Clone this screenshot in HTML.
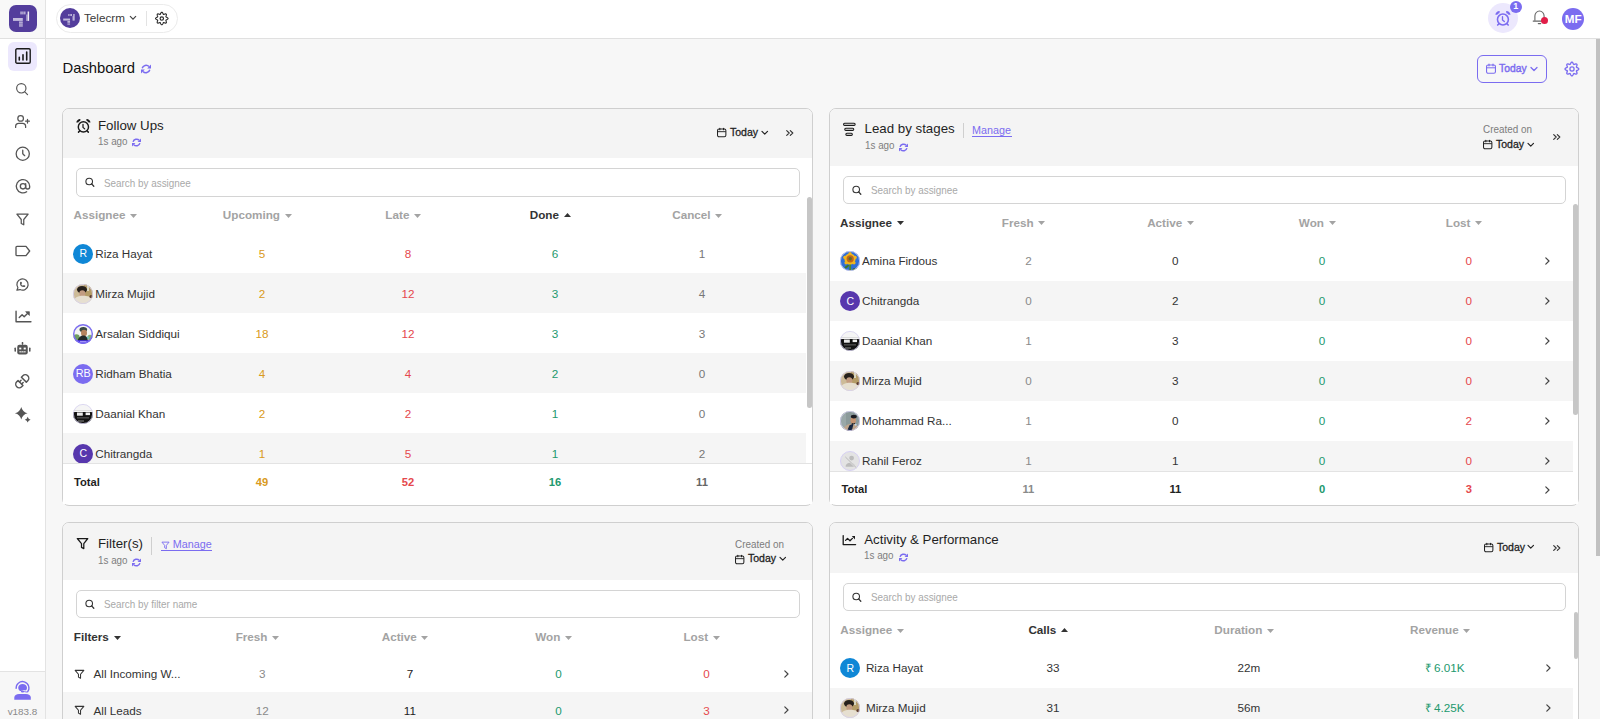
<!DOCTYPE html><html><head><meta charset="utf-8"><style>
*{margin:0;padding:0;box-sizing:border-box}
html,body{width:1600px;height:719px;overflow:hidden;background:#f7f7f7;font-family:"Liberation Sans",sans-serif;color:#222}
.a{position:absolute}
.t{position:absolute;white-space:nowrap;line-height:1}
svg{position:absolute;overflow:visible}
.card{position:absolute;background:#fff;border:1px solid #cfcfcf;border-radius:7px;overflow:hidden}
.chd{position:absolute;left:0;top:0;right:0;background:#f4f4f4}
.srch{position:absolute;border:1px solid #d4d4d4;border-radius:5px;background:#fff}
.gray{background:#f5f5f5}
</style></head><body>
<div class="a" style="left:0;top:0;width:1600px;height:39px;background:#fff;border-bottom:1px solid #e0e0e0"></div>
<div class="a" style="left:0;top:0;width:45px;height:39px;background:#f8f8f8;border-bottom:1px solid #e0e0e0"></div>
<div class="a" style="left:0;top:39px;width:46px;height:680px;background:#fff;border-right:1px solid #e0e0e0"></div>
<div class="a" style="left:45px;top:0;width:1px;height:719px;background:#e3e3e3"></div>
<div class="a" style="left:0;top:671px;width:45px;height:48px;background:#f7f7f7;border-top:1px solid #e3e3e3"></div>
<div class="a" style="left:8.6px;top:4.6px;width:28.2px;height:27.8px;border-radius:7px;background:#533d9c"></div>
<svg style="left:8px;top:4px" width="29" height="29" viewBox="0 0 29 29"><g fill="#fff"><rect x="12.5" y="7.5" width="1.1" height="2.9" opacity="0.8"/><rect x="14.4" y="7.5" width="1.1" height="2.9" opacity="0.8"/><rect x="16.3" y="7.5" width="1.1" height="2.9" opacity="0.8"/><rect x="19.6" y="7.5" width="1.5" height="9.4" opacity="0.9"/><rect x="18.1" y="10.5" width="1.5" height="6.4" opacity="0.45"/><rect x="5" y="14" width="9.8" height="2.9" opacity="0.65"/><rect x="11" y="17.6" width="3.8" height="1.1" opacity="0.8"/><rect x="11" y="19.5" width="3.8" height="1.1" opacity="0.8"/><rect x="11" y="21.4" width="3.8" height="1.1" opacity="0.8"/></g></svg>
<div class="a" style="left:56px;top:4px;width:122px;height:29px;border:1px solid #ebebeb;border-radius:15px;background:#fff"></div>
<div class="a" style="left:60px;top:8px;width:20px;height:20px;border-radius:50%;background:#533d9c"></div>
<svg style="left:60px;top:8px" width="20" height="20" viewBox="0 0 20 20"><g transform="translate(-0.3 0.75) scale(0.7)"><g fill="#fff"><rect x="12.5" y="7.5" width="1.1" height="2.9" opacity="0.8"/><rect x="14.4" y="7.5" width="1.1" height="2.9" opacity="0.8"/><rect x="16.3" y="7.5" width="1.1" height="2.9" opacity="0.8"/><rect x="19.6" y="7.5" width="1.5" height="9.4" opacity="0.9"/><rect x="18.1" y="10.5" width="1.5" height="6.4" opacity="0.45"/><rect x="5" y="14" width="9.8" height="2.9" opacity="0.65"/><rect x="11" y="17.6" width="3.8" height="1.1" opacity="0.8"/><rect x="11" y="19.5" width="3.8" height="1.1" opacity="0.8"/><rect x="11" y="21.4" width="3.8" height="1.1" opacity="0.8"/></g></g></svg>
<div class="t" style="left:84.00px;top:12.00px;font-size:11.7px;color:#3a3a3a;-webkit-text-stroke:0.0px #3a3a3a;">Telecrm</div>
<svg style="left:129px;top:15px" width="8" height="6" viewBox="0 0 8 6"><path d="M1 1.2 L4 4.2 L7 1.2" fill="none" stroke="#444" stroke-width="1.2"/></svg>
<div class="a" style="left:146px;top:11px;width:1px;height:15px;background:#e3e3e3"></div>
<svg style="left:154px;top:11px" width="16" height="16" viewBox="0 0 16 16"><path d="M7.80 1.25 L8.04 1.30 L8.28 1.44 L8.49 1.66 L8.68 1.94 L8.84 2.25 L8.98 2.57 L9.11 2.86 L9.23 3.10 L9.36 3.28 L9.50 3.39 L9.68 3.42 L9.90 3.38 L10.16 3.29 L10.45 3.18 L10.77 3.05 L11.11 2.95 L11.44 2.88 L11.75 2.88 L12.01 2.94 L12.22 3.08 L12.36 3.29 L12.42 3.55 L12.42 3.86 L12.35 4.19 L12.25 4.53 L12.12 4.85 L12.01 5.14 L11.92 5.40 L11.88 5.62 L11.91 5.80 L12.02 5.94 L12.20 6.07 L12.44 6.19 L12.73 6.32 L13.05 6.46 L13.36 6.62 L13.64 6.81 L13.86 7.02 L14.00 7.26 L14.05 7.50 L14.00 7.74 L13.86 7.98 L13.64 8.19 L13.36 8.38 L13.05 8.54 L12.73 8.68 L12.44 8.81 L12.20 8.93 L12.02 9.06 L11.91 9.20 L11.88 9.38 L11.92 9.60 L12.01 9.86 L12.12 10.15 L12.25 10.47 L12.35 10.81 L12.42 11.14 L12.42 11.45 L12.36 11.71 L12.22 11.92 L12.01 12.06 L11.75 12.12 L11.44 12.12 L11.11 12.05 L10.77 11.95 L10.45 11.82 L10.16 11.71 L9.90 11.62 L9.68 11.58 L9.50 11.61 L9.36 11.72 L9.23 11.90 L9.11 12.14 L8.98 12.43 L8.84 12.75 L8.68 13.06 L8.49 13.34 L8.28 13.56 L8.04 13.70 L7.80 13.75 L7.56 13.70 L7.32 13.56 L7.11 13.34 L6.92 13.06 L6.76 12.75 L6.62 12.43 L6.49 12.14 L6.37 11.90 L6.24 11.72 L6.10 11.61 L5.92 11.58 L5.70 11.62 L5.44 11.71 L5.15 11.82 L4.83 11.95 L4.49 12.05 L4.16 12.12 L3.85 12.12 L3.59 12.06 L3.38 11.92 L3.24 11.71 L3.18 11.45 L3.18 11.14 L3.25 10.81 L3.35 10.47 L3.48 10.15 L3.59 9.86 L3.68 9.60 L3.72 9.38 L3.69 9.20 L3.58 9.06 L3.40 8.93 L3.16 8.81 L2.87 8.68 L2.55 8.54 L2.24 8.38 L1.96 8.19 L1.74 7.98 L1.60 7.74 L1.55 7.50 L1.60 7.26 L1.74 7.02 L1.96 6.81 L2.24 6.62 L2.55 6.46 L2.87 6.32 L3.16 6.19 L3.40 6.07 L3.58 5.94 L3.69 5.80 L3.72 5.62 L3.68 5.40 L3.59 5.14 L3.48 4.85 L3.35 4.53 L3.25 4.19 L3.18 3.86 L3.18 3.55 L3.24 3.29 L3.38 3.08 L3.59 2.94 L3.85 2.88 L4.16 2.88 L4.49 2.95 L4.83 3.05 L5.15 3.18 L5.44 3.29 L5.70 3.38 L5.92 3.42 L6.10 3.39 L6.24 3.28 L6.37 3.10 L6.49 2.86 L6.62 2.57 L6.76 2.25 L6.92 1.94 L7.11 1.66 L7.32 1.44 L7.56 1.30Z" fill="none" stroke="#2a2a2a" stroke-width="1.1"/><circle cx="7.8" cy="7.5" r="1.7" fill="none" stroke="#2a2a2a" stroke-width="1.15"/></svg>
<div class="a" style="left:1487.5px;top:3px;width:30px;height:30px;border-radius:50%;background:#ece8fd"></div>
<svg style="left:1495px;top:10.8px" width="15" height="15" viewBox="0 0 14 14"><circle cx="7.4" cy="7.9" r="5.1" fill="none" stroke="#7b6cf0" stroke-width="1.45"/><path d="M7 5.3V8.4L8.7 9.9" fill="none" stroke="#7b6cf0" stroke-width="1.25" stroke-linecap="round" stroke-linejoin="round"/><path d="M1.3 3.5A2.7 2.7 0 0 1 4.3 1.1 M13.5 3.5A2.7 2.7 0 0 0 10.5 1.1" fill="none" stroke="#7b6cf0" stroke-width="2"/><path d="M3.6 12L2.5 13.1 M11.2 12L12.3 13.1" stroke="#7b6cf0" stroke-width="1.5" stroke-linecap="round"/></svg>
<div class="a" style="left:1509.8px;top:0.8px;width:12px;height:12px;border-radius:50%;background:#7b6cf0"></div>
<div class="t" style="left:1513.30px;top:2.28px;font-size:9px;color:#fff;font-weight:bold;">1</div>
<svg style="left:1532px;top:10px" width="14" height="15" viewBox="0 0 14 15"><path d="M2.9 10.8V6.1A4.6 5.1 0 0 1 12.1 6.1V10.8" fill="none" stroke="#666" stroke-width="1.1"/><path d="M1.2 11.1H13.3" stroke="#666" stroke-width="1.1" stroke-linecap="round"/><path d="M6.3 13.6H8.7" stroke="#666" stroke-width="1.1" stroke-linecap="round"/></svg>
<div class="a" style="left:1540.5px;top:16.5px;width:7px;height:7px;border-radius:50%;background:#e11d48"></div>
<div class="a" style="left:1562px;top:7.5px;width:22px;height:22px;border-radius:50%;background:#7b6cf0"></div>
<div class="t" style="left:1564.75px;top:12.60px;font-size:11.7px;color:#fff;font-weight:bold;">MF</div>
<div class="a" style="left:8px;top:42px;width:29px;height:29px;border-radius:6px;background:#ece8fd"></div>
<svg style="left:14.5px;top:48px" width="16" height="16" viewBox="0 0 16 16"><rect x="0.8" y="0.8" width="14.4" height="14.4" rx="1.2" fill="none" stroke="#1a1a1a" stroke-width="1.4"/><path d="M4.3 12V9.2 M8 12V6.8 M11.7 12V4" stroke="#1a1a1a" stroke-width="1.6" stroke-linecap="round"/></svg>
<svg style="left:15.2px;top:81.8px" width="14" height="14" viewBox="0 0 24 24"><circle cx="10.8" cy="10.8" r="8" fill="none" stroke="#555" stroke-width="2" stroke-linecap="round" stroke-linejoin="round"/><path d="M16.8 16.8l4.7 4.7" fill="none" stroke="#555" stroke-width="2" stroke-linecap="round" stroke-linejoin="round"/></svg>
<svg style="left:14px;top:114px" width="17" height="15" viewBox="0 0 26 24"><circle cx="10" cy="7" r="4.5" fill="none" stroke="#555" stroke-width="2" stroke-linecap="round" stroke-linejoin="round"/><path d="M2 21.5v-1.5a5 5 0 0 1 5-5h6a5 5 0 0 1 5 5v1.5" fill="none" stroke="#555" stroke-width="2" stroke-linecap="round" stroke-linejoin="round"/><path d="M21 8.5v6 M18 11.5h6" fill="none" stroke="#555" stroke-width="2" stroke-linecap="round" stroke-linejoin="round"/></svg>
<svg style="left:14.5px;top:146px" width="15.5" height="15.5" viewBox="0 0 24 24"><circle cx="12" cy="12" r="10.2" fill="none" stroke="#555" stroke-width="2" stroke-linecap="round" stroke-linejoin="round"/><path d="M12 6.5v5.5l3 3" fill="none" stroke="#555" stroke-width="2" stroke-linecap="round" stroke-linejoin="round"/></svg>
<svg style="left:14.5px;top:179.2px" width="16" height="16" viewBox="0 0 24 24"><circle cx="12" cy="11" r="4" fill="none" stroke="#555" stroke-width="2" stroke-linecap="round" stroke-linejoin="round"/><path d="M16 7v5a3 3 0 0 0 6 0v-1a10 10 0 1 0-4.5 8.2" fill="none" stroke="#555" stroke-width="2" stroke-linecap="round" stroke-linejoin="round"/></svg>
<svg style="left:15px;top:212px" width="15" height="15" viewBox="0 0 24 24"><path d="M3 3.5h18l-7 8.5v8.5l-4-2v-6.5z" fill="none" stroke="#555" stroke-width="2" stroke-linecap="round" stroke-linejoin="round"/></svg>
<svg style="left:15px;top:245px" width="16" height="12" viewBox="0 0 24 18"><path d="M3 2h13.5l5.5 7-5.5 7H3a1.5 1.5 0 0 1-1.5-1.5v-11A1.5 1.5 0 0 1 3 2z" fill="none" stroke="#555" stroke-width="2" stroke-linecap="round" stroke-linejoin="round"/></svg>
<svg style="left:15px;top:276.5px" width="15" height="15" viewBox="0 0 24 24"><path d="M3 21l1.65-3.8a9 9 0 1 1 3.4 2.9L3 21" fill="none" stroke="#555" stroke-width="2" stroke-linecap="round" stroke-linejoin="round"/><path d="M9 10a.5.5 0 0 0 1 0V9a.5.5 0 0 0-1 0v1a5 5 0 0 0 5 5h1a.5.5 0 0 0 0-1h-1a.5.5 0 0 0 0 1" fill="none" stroke="#555" stroke-width="2" stroke-linecap="round" stroke-linejoin="round"/></svg>
<svg style="left:14.5px;top:309.5px" width="17" height="13" viewBox="0 0 24 18"><path d="M1.5 1.5v15h21" fill="none" stroke="#555" stroke-width="2" stroke-linecap="round" stroke-linejoin="round"/><path d="M6 10.5l4-4 3 3 5-5" fill="none" stroke="#555" stroke-width="2" stroke-linecap="round" stroke-linejoin="round"/><path d="M15 2.2h5.3v5.3z" fill="#555" stroke="#555" stroke-width="1" stroke-linejoin="round"/></svg>
<svg style="left:14px;top:342px" width="17" height="14" viewBox="0 0 24 20"><g fill="#555"><rect x="11.2" y="0" width="1.6" height="4"/><circle cx="12" cy="1.5" r="1.3"/><rect x="4.5" y="4" width="15" height="14" rx="3"/><rect x="0.5" y="8" width="2.2" height="6" rx="1"/><rect x="21.3" y="8" width="2.2" height="6" rx="1"/></g><g fill="#fff"><rect x="7.3" y="8" width="3" height="2.6"/><rect x="13.7" y="8" width="3" height="2.6"/><rect x="7.5" y="13.3" width="9" height="1.5"/></g><g fill="#555"><rect x="9.8" y="13.3" width="0.8" height="1.5"/><rect x="13.4" y="13.3" width="0.8" height="1.5"/></g></svg>
<svg style="left:11.3px;top:370.2px" width="22.5" height="22.5" viewBox="0 0 24 24"><g transform="rotate(-45 12 12)" fill="none" stroke="#555" stroke-width="1.55" stroke-linejoin="round" stroke-linecap="round"><path d="M14.4 8.3h2.2a3.7 3.7 0 0 1 0 7.4h-2.2z"/><path d="M9.4 8.3h-2a3.7 3.7 0 0 0 0 7.4h2z"/><path d="M9.4 10.4h2.4 M9.4 13.6h2.4"/></g></svg>
<svg style="left:14px;top:406px" width="17" height="17" viewBox="0 0 17 17"><path fill="#555" d="M7.25 0.9000000000000004Q8.51 5.94 13.55 7.2Q8.51 8.46 7.25 13.5Q5.99 8.46 0.9500000000000002 7.2Q5.99 5.94 7.25 0.9000000000000004Z"/><path fill="#555" d="M13.7 10.799999999999999Q14.28 13.12 16.599999999999998 13.7Q14.28 14.28 13.7 16.599999999999998Q13.12 14.28 10.799999999999999 13.7Q13.12 13.12 13.7 10.799999999999999Z"/></svg>
<svg style="left:14px;top:680px" width="17" height="20" viewBox="0 0 17 20"><path d="M2.2 8.9A6.4 6.4 0 1 1 13.4 12.1" fill="none" stroke="#7b6cf0" stroke-width="1.3"/><path d="M8.6 4C11 4 13 5.6 13 7.8C13 9 12.5 10 11.6 10.6C10.8 10.2 9.8 10.3 8.8 10.6C7.6 11 6.2 11.3 5.4 10.5C4.6 9.8 4.2 8.8 4.2 7.8C4.2 5.6 6.2 4 8.6 4Z" fill="#7b6cf0"/><ellipse cx="8.6" cy="11.6" rx="1.8" ry="0.9" fill="#7b6cf0"/><path d="M13.4 12.1C12.5 12.2 11 11.6 10.3 11.6" fill="none" stroke="#7b6cf0" stroke-width="1"/><path d="M0.3 19.75V17.6C0.3 15.1 2.4 13.9 5 13.9H12C14.6 13.9 16.8 15.1 16.8 17.6V19.75Z" fill="#7b6cf0"/></svg>
<div class="t" style="left:7.64px;top:706.92px;font-size:9.9px;color:#8a8a8a;-webkit-text-stroke:0.0px #8a8a8a;">v183.8</div>
<div class="t" style="left:62.50px;top:60.67px;font-size:14.8px;color:#111;-webkit-text-stroke:0.0px #111;">Dashboard</div>
<svg style="left:141px;top:63.5px" width="10" height="10" viewBox="0 0 10 10"><path d="M1.2 4.3A4 4 0 0 1 8 2.6 M8.8 5.7A4 4 0 0 1 2 7.4" fill="none" stroke="#7b6cf0" stroke-width="1.5"/><path d="M10 0.6V4.4H6.2Z M0 9.4V5.6H3.8Z" fill="#7b6cf0"/></svg>
<div class="a" style="left:1477px;top:55px;width:70px;height:28px;border:1.2px solid #7b6cf0;border-radius:6px"></div>
<svg style="left:1485.8px;top:63.8px" width="10" height="10" viewBox="0 0 10 10"><rect x="0.55" y="1" width="8.9" height="8.3" rx="1.6" fill="none" stroke="#7b6cf0" stroke-width="1.1"/><path d="M0.6 3.8H9.4" stroke="#7b6cf0" stroke-width="1"/><path d="M3 0.2V1.8 M7 0.2V1.8" stroke="#7b6cf0" stroke-width="1.2" stroke-linecap="round"/></svg>
<div class="t" style="left:1498.90px;top:61.90px;font-size:11.7px;color:#7b6cf0;transform:scaleX(0.885);transform-origin:0 0;-webkit-text-stroke:0.45px #7b6cf0">Today</div>
<svg style="left:1529.5px;top:65.5px" width="8" height="6" viewBox="0 0 8 6"><path d="M1 1.5L4 4.5L7 1.5" fill="none" stroke="#7b6cf0" stroke-width="1.3" stroke-linecap="round" stroke-linejoin="round"/></svg>
<svg style="left:1563.5px;top:60.5px" width="16" height="16" viewBox="0 0 16 16"><path d="M7.90 1.15 L8.17 1.20 L8.42 1.35 L8.66 1.59 L8.87 1.88 L9.05 2.21 L9.21 2.55 L9.35 2.86 L9.49 3.12 L9.63 3.31 L9.79 3.43 L9.99 3.46 L10.23 3.43 L10.51 3.34 L10.83 3.22 L11.18 3.09 L11.54 2.99 L11.90 2.93 L12.23 2.93 L12.52 3.00 L12.74 3.16 L12.90 3.38 L12.97 3.67 L12.97 4.00 L12.91 4.36 L12.81 4.72 L12.68 5.07 L12.56 5.39 L12.47 5.67 L12.44 5.91 L12.47 6.11 L12.59 6.27 L12.78 6.41 L13.04 6.55 L13.35 6.69 L13.69 6.85 L14.02 7.03 L14.31 7.24 L14.55 7.48 L14.70 7.73 L14.75 8.00 L14.70 8.27 L14.55 8.52 L14.31 8.76 L14.02 8.97 L13.69 9.15 L13.35 9.31 L13.04 9.45 L12.78 9.59 L12.59 9.73 L12.47 9.89 L12.44 10.09 L12.47 10.33 L12.56 10.61 L12.68 10.93 L12.81 11.28 L12.91 11.64 L12.97 12.00 L12.97 12.33 L12.90 12.62 L12.74 12.84 L12.52 13.00 L12.23 13.07 L11.90 13.07 L11.54 13.01 L11.18 12.91 L10.83 12.78 L10.51 12.66 L10.23 12.57 L9.99 12.54 L9.79 12.57 L9.63 12.69 L9.49 12.88 L9.35 13.14 L9.21 13.45 L9.05 13.79 L8.87 14.12 L8.66 14.41 L8.42 14.65 L8.17 14.80 L7.90 14.85 L7.63 14.80 L7.38 14.65 L7.14 14.41 L6.93 14.12 L6.75 13.79 L6.59 13.45 L6.45 13.14 L6.31 12.88 L6.17 12.69 L6.01 12.57 L5.81 12.54 L5.57 12.57 L5.29 12.66 L4.97 12.78 L4.62 12.91 L4.26 13.01 L3.90 13.07 L3.57 13.07 L3.28 13.00 L3.06 12.84 L2.90 12.62 L2.83 12.33 L2.83 12.00 L2.89 11.64 L2.99 11.28 L3.12 10.93 L3.24 10.61 L3.33 10.33 L3.36 10.09 L3.33 9.89 L3.21 9.73 L3.02 9.59 L2.76 9.45 L2.45 9.31 L2.11 9.15 L1.78 8.97 L1.49 8.76 L1.25 8.52 L1.10 8.27 L1.05 8.00 L1.10 7.73 L1.25 7.48 L1.49 7.24 L1.78 7.03 L2.11 6.85 L2.45 6.69 L2.76 6.55 L3.02 6.41 L3.21 6.27 L3.33 6.11 L3.36 5.91 L3.33 5.67 L3.24 5.39 L3.12 5.07 L2.99 4.72 L2.89 4.36 L2.83 4.00 L2.83 3.67 L2.90 3.38 L3.06 3.16 L3.28 3.00 L3.57 2.93 L3.90 2.93 L4.26 2.99 L4.62 3.09 L4.97 3.22 L5.29 3.34 L5.57 3.43 L5.81 3.46 L6.01 3.43 L6.17 3.31 L6.31 3.12 L6.45 2.86 L6.59 2.55 L6.75 2.21 L6.93 1.88 L7.14 1.59 L7.38 1.35 L7.63 1.20Z" fill="none" stroke="#7b6cf0" stroke-width="1.35"/><circle cx="8" cy="8" r="2.1" fill="none" stroke="#7b6cf0" stroke-width="1.3"/></svg>
<div class="card" style="left:62px;top:108px;width:751px;height:398px"><div class="chd" style="height:49px"></div></div>
<svg style="left:75.5px;top:119px" width="14" height="14" viewBox="0 0 14 14"><circle cx="7.4" cy="7.9" r="5.1" fill="none" stroke="#1a1a1a" stroke-width="1.45"/><path d="M7 5.3V8.4L8.7 9.9" fill="none" stroke="#1a1a1a" stroke-width="1.25" stroke-linecap="round" stroke-linejoin="round"/><path d="M1.3 3.5A2.7 2.7 0 0 1 4.3 1.1 M13.5 3.5A2.7 2.7 0 0 0 10.5 1.1" fill="none" stroke="#1a1a1a" stroke-width="2"/><path d="M3.6 12L2.5 13.1 M11.2 12L12.3 13.1" stroke="#1a1a1a" stroke-width="1.5" stroke-linecap="round"/></svg>
<div class="t" style="left:98.00px;top:118.84px;font-size:13.3px;color:#1f1f1f;-webkit-text-stroke:0.0px #1f1f1f;">Follow Ups</div>
<div class="t" style="left:98.00px;top:136.95px;font-size:10.1px;color:#7e7e7e;-webkit-text-stroke:0.0px #7e7e7e;transform:scaleX(0.975);transform-origin:0 0">1s ago</div>
<svg style="left:132.2px;top:138.3px" width="9" height="9" viewBox="0 0 10 10"><path d="M1.2 4.3A4 4 0 0 1 8 2.6 M8.8 5.7A4 4 0 0 1 2 7.4" fill="none" stroke="#7b6cf0" stroke-width="1.6"/><path d="M10 0.6V4.4H6.2Z M0 9.4V5.6H3.8Z" fill="#7b6cf0"/></svg>
<svg style="left:717.0px;top:128.3px" width="9.4" height="9.6" viewBox="0 0 10 10"><rect x="0.55" y="1" width="8.9" height="8.3" rx="1.6" fill="none" stroke="#222" stroke-width="1.1"/><path d="M0.6 3.8H9.4" stroke="#222" stroke-width="1"/><path d="M3 0.2V1.8 M7 0.2V1.8" stroke="#222" stroke-width="1.2" stroke-linecap="round"/></svg>
<div class="t" style="left:729.90px;top:126.00px;font-size:11.7px;color:#222;transform:scaleX(0.9);transform-origin:0 0;-webkit-text-stroke:0.3px #222">Today</div>
<svg style="left:760.7px;top:129.70000000000002px" width="7.5" height="5.5" viewBox="0 0 8 6"><path d="M1 1.5L4 4.5L7 1.5" fill="none" stroke="#222" stroke-width="1.3" stroke-linecap="round" stroke-linejoin="round"/></svg>
<svg style="left:786px;top:130px" width="8" height="6" viewBox="0 0 8 6"><path d="M0.7 0.6L3.2 3L0.7 5.4 M4.3 0.6L6.8 3L4.3 5.4" fill="none" stroke="#333" stroke-width="1.15" stroke-linecap="round" stroke-linejoin="round"/></svg>
<div class="srch" style="left:76px;top:168px;width:724px;height:29px"></div>
<svg style="left:85px;top:176.5px" width="10" height="10" viewBox="0 0 10 10"><circle cx="4.2" cy="4.5" r="3.3" fill="none" stroke="#333" stroke-width="1.1"/><path d="M6.6 6.9L8.8 9.2" stroke="#333" stroke-width="1.3" stroke-linecap="round"/></svg>
<div class="t" style="left:103.50px;top:177.66px;font-size:10.8px;color:#a9a9a9;-webkit-text-stroke:0.0px #a9a9a9;transform:scaleX(0.915);transform-origin:0 0">Search by assignee</div>
<div class="t" style="left:73.50px;top:209.30px;font-size:11.7px;color:#a3a3a3;font-weight:bold;">Assignee</div>
<svg style="left:130.11746875px;top:213.79999999999998px" width="7" height="4" viewBox="0 0 7 4"><path d="M0 0L3.5 4L7 0z" fill="#a3a3a3"/></svg>
<div class="t" style="left:222.80px;top:209.30px;font-size:11.7px;color:#a3a3a3;font-weight:bold;">Upcoming</div>
<svg style="left:284.597359375px;top:213.79999999999998px" width="7" height="4" viewBox="0 0 7 4"><path d="M0 0L3.5 4L7 0z" fill="#a3a3a3"/></svg>
<div class="t" style="left:385.37px;top:209.30px;font-size:11.7px;color:#a3a3a3;font-weight:bold;">Late</div>
<svg style="left:414.02723437500003px;top:213.79999999999998px" width="7" height="4" viewBox="0 0 7 4"><path d="M0 0L3.5 4L7 0z" fill="#a3a3a3"/></svg>
<div class="t" style="left:529.78px;top:209.30px;font-size:11.7px;color:#333;font-weight:bold;">Done</div>
<svg style="left:563.6240859375px;top:213.39999999999998px" width="7" height="4" viewBox="0 0 7 4"><path d="M0 4L3.5 0L7 4z" fill="#333"/></svg>
<div class="t" style="left:672.22px;top:209.30px;font-size:11.7px;color:#a3a3a3;font-weight:bold;">Cancel</div>
<svg style="left:715.1825156250001px;top:213.79999999999998px" width="7" height="4" viewBox="0 0 7 4"><path d="M0 0L3.5 4L7 0z" fill="#a3a3a3"/></svg>
<div class="a gray" style="left:63px;top:273px;width:743px;height:40px"></div>
<div class="a gray" style="left:63px;top:353px;width:743px;height:40px"></div>
<div class="a gray" style="left:63px;top:433px;width:743px;height:30px"></div>
<div class="a" style="left:73.2px;top:243.6px;width:20px;height:20px;border-radius:50%;background:#0f87d6"></div>
<div class="t" style="left:79.41px;top:248.41px;font-size:10.5px;color:#fff;-webkit-text-stroke:0.0px #fff;">R</div>
<div class="t" style="left:95.20px;top:247.90px;font-size:11.7px;color:#333;-webkit-text-stroke:0.0px #333;">Riza Hayat</div>
<div class="t" style="left:258.75px;top:247.90px;font-size:11.7px;color:#d99a20;-webkit-text-stroke:0.0px #d99a20;">5</div>
<div class="t" style="left:404.75px;top:247.90px;font-size:11.7px;color:#e5484d;-webkit-text-stroke:0.0px #e5484d;">8</div>
<div class="t" style="left:551.75px;top:247.90px;font-size:11.7px;color:#22996e;-webkit-text-stroke:0.0px #22996e;">6</div>
<div class="t" style="left:698.75px;top:247.90px;font-size:11.7px;color:#777;-webkit-text-stroke:0.0px #777;">1</div>
<svg style="left:73.2px;top:283.6px" width="20" height="20" viewBox="0 0 20 20"><defs><clipPath id="cm1"><circle cx="10" cy="10" r="10"/></clipPath></defs><g clip-path="url(#cm1)"><rect width="20" height="20" fill="#cdbb98"/><rect x="11" y="0" width="9" height="12" fill="#b59d68"/><rect x="14" y="1" width="2" height="6" fill="#d9d6c0"/><ellipse cx="9" cy="5.6" rx="5" ry="3.6" fill="#26201c"/><ellipse cx="9.3" cy="9.6" rx="3" ry="3.3" fill="#c29c82"/><path d="M7 6.5c1-1.5 4-1.5 5.3 0.3L12 5 8 4z" fill="#26201c"/><path d="M0 20C0 14 4.5 11.8 10 11.8S20 14 20 20Z" fill="#e6dfd0"/><ellipse cx="18" cy="12.5" rx="1.6" ry="1.6" fill="#5a3a2a"/></g><circle cx="10" cy="10" r="9.6" fill="none" stroke="#d6d0f0" stroke-width="0.8"/></svg>
<div class="t" style="left:95.20px;top:287.90px;font-size:11.7px;color:#333;-webkit-text-stroke:0.0px #333;">Mirza Mujid</div>
<div class="t" style="left:258.75px;top:287.90px;font-size:11.7px;color:#d99a20;-webkit-text-stroke:0.0px #d99a20;">2</div>
<div class="t" style="left:401.49px;top:287.90px;font-size:11.7px;color:#e5484d;-webkit-text-stroke:0.0px #e5484d;">12</div>
<div class="t" style="left:551.75px;top:287.90px;font-size:11.7px;color:#22996e;-webkit-text-stroke:0.0px #22996e;">3</div>
<div class="t" style="left:698.75px;top:287.90px;font-size:11.7px;color:#777;-webkit-text-stroke:0.0px #777;">4</div>
<svg style="left:73.2px;top:323.6px" width="20" height="20" viewBox="0 0 20 20"><defs><clipPath id="ca"><circle cx="10" cy="10" r="10"/></clipPath></defs><g clip-path="url(#ca)"><rect width="20" height="20" fill="#f4f6f3"/><ellipse cx="3.5" cy="13.5" rx="3.2" ry="3.2" fill="#6f9e62"/><ellipse cx="17" cy="13.5" rx="2.6" ry="2.8" fill="#88b27c"/><circle cx="14.5" cy="13.8" r="1.4" fill="#6cc8c4"/><ellipse cx="10.3" cy="5.6" rx="3.8" ry="2.6" fill="#3a4a44"/><ellipse cx="11" cy="9" rx="3" ry="3.2" fill="#b5845f"/><path d="M4.5 17.5C5 13.5 8 11.6 10.4 11.6S14.5 13.2 15 17.5Z" fill="#232b2b"/><rect x="0" y="16.2" width="20" height="4" fill="#4b33ea"/><rect x="7" y="17.4" width="6.5" height="0.9" fill="#dcd6ff"/></g><circle cx="10" cy="10" r="9.3" fill="none" stroke="#7b6cf0" stroke-width="1.4"/></svg>
<div class="t" style="left:95.20px;top:327.90px;font-size:11.7px;color:#333;-webkit-text-stroke:0.0px #333;">Arsalan Siddiqui</div>
<div class="t" style="left:255.49px;top:327.90px;font-size:11.7px;color:#d99a20;-webkit-text-stroke:0.0px #d99a20;">18</div>
<div class="t" style="left:401.49px;top:327.90px;font-size:11.7px;color:#e5484d;-webkit-text-stroke:0.0px #e5484d;">12</div>
<div class="t" style="left:551.75px;top:327.90px;font-size:11.7px;color:#22996e;-webkit-text-stroke:0.0px #22996e;">3</div>
<div class="t" style="left:698.75px;top:327.90px;font-size:11.7px;color:#777;-webkit-text-stroke:0.0px #777;">3</div>
<div class="a" style="left:73.2px;top:363.6px;width:20px;height:20px;border-radius:50%;background:#7b6cf0"></div>
<div class="t" style="left:75.70px;top:368.16px;font-size:10.8px;color:#fff;-webkit-text-stroke:0.0px #fff;">RB</div>
<div class="t" style="left:95.20px;top:367.90px;font-size:11.7px;color:#333;-webkit-text-stroke:0.0px #333;">Ridham Bhatia</div>
<div class="t" style="left:258.75px;top:367.90px;font-size:11.7px;color:#d99a20;-webkit-text-stroke:0.0px #d99a20;">4</div>
<div class="t" style="left:404.75px;top:367.90px;font-size:11.7px;color:#e5484d;-webkit-text-stroke:0.0px #e5484d;">4</div>
<div class="t" style="left:551.75px;top:367.90px;font-size:11.7px;color:#22996e;-webkit-text-stroke:0.0px #22996e;">2</div>
<div class="t" style="left:698.75px;top:367.90px;font-size:11.7px;color:#777;-webkit-text-stroke:0.0px #777;">0</div>
<svg style="left:73.2px;top:403.6px" width="20" height="20" viewBox="0 0 20 20"><defs><clipPath id="cd1"><circle cx="10" cy="10" r="10"/></clipPath></defs><g clip-path="url(#cd1)"><rect width="20" height="20" fill="#f5f5f5"/><rect x="0" y="6.2" width="20" height="0.8" fill="#d8d8d8"/><rect x="0" y="8" width="20" height="12" fill="#121212"/><rect x="3.8" y="8.5" width="6" height="3.2" fill="#e8e8e8"/><rect x="12.6" y="8.5" width="4.5" height="2.6" fill="#f0f0f0"/><rect x="2" y="8" width="1.8" height="5" fill="#111"/><rect x="10.2" y="8.5" width="1.8" height="4.5" fill="#111"/><rect x="17.4" y="8" width="1.6" height="5" fill="#111"/><rect x="4" y="13.5" width="12" height="0.8" fill="#777"/><rect x="5" y="16.5" width="6" height="1" fill="#8a8a8a"/></g><circle cx="10" cy="10" r="9.6" fill="none" stroke="#d6d0f0" stroke-width="0.8"/></svg>
<div class="t" style="left:95.20px;top:407.90px;font-size:11.7px;color:#333;-webkit-text-stroke:0.0px #333;">Daanial Khan</div>
<div class="t" style="left:258.75px;top:407.90px;font-size:11.7px;color:#d99a20;-webkit-text-stroke:0.0px #d99a20;">2</div>
<div class="t" style="left:404.75px;top:407.90px;font-size:11.7px;color:#e5484d;-webkit-text-stroke:0.0px #e5484d;">2</div>
<div class="t" style="left:551.75px;top:407.90px;font-size:11.7px;color:#22996e;-webkit-text-stroke:0.0px #22996e;">1</div>
<div class="t" style="left:698.75px;top:407.90px;font-size:11.7px;color:#777;-webkit-text-stroke:0.0px #777;">0</div>
<div class="a" style="left:73.2px;top:443.6px;width:20px;height:20px;border-radius:50%;background:#5737ad"></div>
<div class="t" style="left:79.41px;top:448.41px;font-size:10.5px;color:#fff;-webkit-text-stroke:0.0px #fff;">C</div>
<div class="t" style="left:95.20px;top:447.90px;font-size:11.7px;color:#333;-webkit-text-stroke:0.0px #333;">Chitrangda</div>
<div class="t" style="left:258.75px;top:447.90px;font-size:11.7px;color:#d99a20;-webkit-text-stroke:0.0px #d99a20;">1</div>
<div class="t" style="left:404.75px;top:447.90px;font-size:11.7px;color:#e5484d;-webkit-text-stroke:0.0px #e5484d;">5</div>
<div class="t" style="left:551.75px;top:447.90px;font-size:11.7px;color:#22996e;-webkit-text-stroke:0.0px #22996e;">1</div>
<div class="t" style="left:698.75px;top:447.90px;font-size:11.7px;color:#777;-webkit-text-stroke:0.0px #777;">2</div>
<div class="a" style="left:63px;top:463px;width:749px;height:1px;background:#e3e3e3"></div>
<div class="a" style="left:63px;top:464px;width:749px;height:40px;background:#fff"></div>
<div class="t" style="left:74.00px;top:476.52px;font-size:11.2px;color:#1f1f1f;font-weight:bold;">Total</div>
<div class="t" style="left:255.77px;top:476.52px;font-size:11.2px;color:#d99a20;font-weight:bold;">49</div>
<div class="t" style="left:401.77px;top:476.52px;font-size:11.2px;color:#e5484d;font-weight:bold;">52</div>
<div class="t" style="left:548.77px;top:476.52px;font-size:11.2px;color:#22996e;font-weight:bold;">16</div>
<div class="t" style="left:696.08px;top:476.52px;font-size:11.2px;color:#666;font-weight:bold;">11</div>
<div class="a" style="left:806.5px;top:197px;width:5px;height:211px;border-radius:3px;background:#c6c6c6"></div>
<div class="card" style="left:829px;top:108px;width:750px;height:398px"><div class="chd" style="height:57px"></div></div>
<svg style="left:842px;top:122px" width="14" height="14" viewBox="0 0 14 14"><g fill="none" stroke="#1a1a1a" stroke-width="1.1"><rect x="1.55" y="1.25" width="11.6" height="2.1" rx="1.05"/><rect x="2.75" y="6.25" width="9.0" height="2.1" rx="1.05"/><rect x="3.85" y="11.25" width="6.5" height="2.1" rx="1.05"/></g></svg>
<div class="t" style="left:864.50px;top:122.34px;font-size:13.3px;color:#1f1f1f;-webkit-text-stroke:0.0px #1f1f1f;">Lead by stages</div>
<div class="a" style="left:963px;top:122.5px;width:1px;height:15.5px;background:#cfcfcf"></div>
<div class="t" style="left:972.00px;top:124.86px;font-size:10.8px;color:#7b6cf0;-webkit-text-stroke:0.0px #7b6cf0;">Manage</div>
<div class="a" style="left:972px;top:136px;width:39.5px;height:1px;background:#7b6cf0"></div>
<div class="t" style="left:864.50px;top:140.65px;font-size:10.1px;color:#7e7e7e;-webkit-text-stroke:0.0px #7e7e7e;transform:scaleX(0.975);transform-origin:0 0">1s ago</div>
<svg style="left:898.8px;top:142.5px" width="9" height="9" viewBox="0 0 10 10"><path d="M1.2 4.3A4 4 0 0 1 8 2.6 M8.8 5.7A4 4 0 0 1 2 7.4" fill="none" stroke="#7b6cf0" stroke-width="1.6"/><path d="M10 0.6V4.4H6.2Z M0 9.4V5.6H3.8Z" fill="#7b6cf0"/></svg>
<div class="t" style="left:1482.50px;top:124.26px;font-size:10.8px;color:#7c7c7c;-webkit-text-stroke:0.0px #7c7c7c;transform:scaleX(0.915);transform-origin:0 0">Created on</div>
<svg style="left:1482.8px;top:140.3px" width="9.4" height="9.6" viewBox="0 0 10 10"><rect x="0.55" y="1" width="8.9" height="8.3" rx="1.6" fill="none" stroke="#222" stroke-width="1.1"/><path d="M0.6 3.8H9.4" stroke="#222" stroke-width="1"/><path d="M3 0.2V1.8 M7 0.2V1.8" stroke="#222" stroke-width="1.2" stroke-linecap="round"/></svg>
<div class="t" style="left:1495.70px;top:138.00px;font-size:11.7px;color:#222;transform:scaleX(0.9);transform-origin:0 0;-webkit-text-stroke:0.3px #222">Today</div>
<svg style="left:1526.5px;top:141.70000000000002px" width="7.5" height="5.5" viewBox="0 0 8 6"><path d="M1 1.5L4 4.5L7 1.5" fill="none" stroke="#222" stroke-width="1.3" stroke-linecap="round" stroke-linejoin="round"/></svg>
<svg style="left:1553px;top:133.5px" width="8" height="6" viewBox="0 0 8 6"><path d="M0.7 0.6L3.2 3L0.7 5.4 M4.3 0.6L6.8 3L4.3 5.4" fill="none" stroke="#333" stroke-width="1.15" stroke-linecap="round" stroke-linejoin="round"/></svg>
<div class="srch" style="left:843px;top:176px;width:723px;height:28px"></div>
<svg style="left:852px;top:184.5px" width="10" height="10" viewBox="0 0 10 10"><circle cx="4.2" cy="4.5" r="3.3" fill="none" stroke="#333" stroke-width="1.1"/><path d="M6.6 6.9L8.8 9.2" stroke="#333" stroke-width="1.3" stroke-linecap="round"/></svg>
<div class="t" style="left:870.50px;top:185.16px;font-size:10.8px;color:#a9a9a9;-webkit-text-stroke:0.0px #a9a9a9;transform:scaleX(0.915);transform-origin:0 0">Search by assignee</div>
<div class="t" style="left:840.00px;top:216.70px;font-size:11.7px;color:#333;font-weight:bold;">Assignee</div>
<svg style="left:896.6174687500001px;top:221.2px" width="7" height="4" viewBox="0 0 7 4"><path d="M0 0L3.5 4L7 0z" fill="#333"/></svg>
<div class="t" style="left:1001.87px;top:216.70px;font-size:11.7px;color:#a3a3a3;font-weight:bold;">Fresh</div>
<svg style="left:1038.3293671874999px;top:221.2px" width="7" height="4" viewBox="0 0 7 4"><path d="M0 0L3.5 4L7 0z" fill="#a3a3a3"/></svg>
<div class="t" style="left:1147.14px;top:216.70px;font-size:11.7px;color:#a3a3a3;font-weight:bold;">Active</div>
<svg style="left:1186.8573124999998px;top:221.2px" width="7" height="4" viewBox="0 0 7 4"><path d="M0 0L3.5 4L7 0z" fill="#a3a3a3"/></svg>
<div class="t" style="left:1298.84px;top:216.70px;font-size:11.7px;color:#a3a3a3;font-weight:bold;">Won</div>
<svg style="left:1328.5619609374999px;top:221.2px" width="7" height="4" viewBox="0 0 7 4"><path d="M0 0L3.5 4L7 0z" fill="#a3a3a3"/></svg>
<div class="t" style="left:1445.85px;top:216.70px;font-size:11.7px;color:#a3a3a3;font-weight:bold;">Lost</div>
<svg style="left:1475.1471562499999px;top:221.2px" width="7" height="4" viewBox="0 0 7 4"><path d="M0 0L3.5 4L7 0z" fill="#a3a3a3"/></svg>
<div class="a gray" style="left:830px;top:281px;width:743px;height:40px"></div>
<div class="a gray" style="left:830px;top:361px;width:743px;height:40px"></div>
<div class="a gray" style="left:830px;top:441px;width:743px;height:30px"></div>
<svg style="left:840.3px;top:251px" width="20" height="20" viewBox="0 0 20 20"><defs><clipPath id="cn"><circle cx="10" cy="10" r="10"/></clipPath></defs><g clip-path="url(#cn)"><rect width="20" height="20" fill="#2f6fd6"/><path d="M10.2 12.5V20" stroke="#4c8a2c" stroke-width="1.8"/><ellipse cx="6.8" cy="15.6" rx="2.6" ry="1.1" transform="rotate(-35 6.8 15.6)" fill="#3f7a28"/><ellipse cx="14.5" cy="18.2" rx="2.6" ry="1" transform="rotate(-15 14.5 18.2)" fill="#2c5a1c"/><g fill="#f0b51e"><circle cx="10" cy="8" r="5.6"/><circle cx="10" cy="2.6" r="1.6"/><circle cx="15.2" cy="6.4" r="1.6"/><circle cx="14" cy="11.8" r="1.6"/><circle cx="6" cy="11.8" r="1.6"/><circle cx="4.8" cy="6.4" r="1.6"/></g><circle cx="10.2" cy="7.8" r="3.6" fill="#c0651a"/><circle cx="10.2" cy="7.8" r="1.7" fill="#5e6a28"/></g><circle cx="10" cy="10" r="9.6" fill="none" stroke="#d6d0f0" stroke-width="0.8"/></svg>
<div class="t" style="left:862.00px;top:255.30px;font-size:11.7px;color:#333;-webkit-text-stroke:0.0px #333;">Amina Firdous</div>
<div class="t" style="left:1025.15px;top:255.30px;font-size:11.7px;color:#8a8a8a;-webkit-text-stroke:0.0px #8a8a8a;">2</div>
<div class="t" style="left:1172.05px;top:255.30px;font-size:11.7px;color:#333;-webkit-text-stroke:0.0px #333;">0</div>
<div class="t" style="left:1318.75px;top:255.30px;font-size:11.7px;color:#22996e;-webkit-text-stroke:0.0px #22996e;">0</div>
<div class="t" style="left:1465.55px;top:255.30px;font-size:11.7px;color:#e5484d;-webkit-text-stroke:0.0px #e5484d;">0</div>
<svg style="left:1545.3px;top:257px" width="5" height="8" viewBox="0 0 5 8"><path d="M0.8 0.8L4 4L0.8 7.2" fill="none" stroke="#444" stroke-width="1.2" stroke-linecap="round" stroke-linejoin="round"/></svg>
<div class="a" style="left:840.3px;top:291px;width:20px;height:20px;border-radius:50%;background:#5737ad"></div>
<div class="t" style="left:846.51px;top:295.81px;font-size:10.5px;color:#fff;-webkit-text-stroke:0.0px #fff;">C</div>
<div class="t" style="left:862.00px;top:295.30px;font-size:11.7px;color:#333;-webkit-text-stroke:0.0px #333;">Chitrangda</div>
<div class="t" style="left:1025.15px;top:295.30px;font-size:11.7px;color:#8a8a8a;-webkit-text-stroke:0.0px #8a8a8a;">0</div>
<div class="t" style="left:1172.05px;top:295.30px;font-size:11.7px;color:#333;-webkit-text-stroke:0.0px #333;">2</div>
<div class="t" style="left:1318.75px;top:295.30px;font-size:11.7px;color:#22996e;-webkit-text-stroke:0.0px #22996e;">0</div>
<div class="t" style="left:1465.55px;top:295.30px;font-size:11.7px;color:#e5484d;-webkit-text-stroke:0.0px #e5484d;">0</div>
<svg style="left:1545.3px;top:297px" width="5" height="8" viewBox="0 0 5 8"><path d="M0.8 0.8L4 4L0.8 7.2" fill="none" stroke="#444" stroke-width="1.2" stroke-linecap="round" stroke-linejoin="round"/></svg>
<svg style="left:840.3px;top:331px" width="20" height="20" viewBox="0 0 20 20"><defs><clipPath id="cd2"><circle cx="10" cy="10" r="10"/></clipPath></defs><g clip-path="url(#cd2)"><rect width="20" height="20" fill="#f5f5f5"/><rect x="0" y="6.2" width="20" height="0.8" fill="#d8d8d8"/><rect x="0" y="8" width="20" height="12" fill="#121212"/><rect x="3.8" y="8.5" width="6" height="3.2" fill="#e8e8e8"/><rect x="12.6" y="8.5" width="4.5" height="2.6" fill="#f0f0f0"/><rect x="2" y="8" width="1.8" height="5" fill="#111"/><rect x="10.2" y="8.5" width="1.8" height="4.5" fill="#111"/><rect x="17.4" y="8" width="1.6" height="5" fill="#111"/><rect x="4" y="13.5" width="12" height="0.8" fill="#777"/><rect x="5" y="16.5" width="6" height="1" fill="#8a8a8a"/></g><circle cx="10" cy="10" r="9.6" fill="none" stroke="#d6d0f0" stroke-width="0.8"/></svg>
<div class="t" style="left:862.00px;top:335.30px;font-size:11.7px;color:#333;-webkit-text-stroke:0.0px #333;">Daanial Khan</div>
<div class="t" style="left:1025.15px;top:335.30px;font-size:11.7px;color:#8a8a8a;-webkit-text-stroke:0.0px #8a8a8a;">1</div>
<div class="t" style="left:1172.05px;top:335.30px;font-size:11.7px;color:#333;-webkit-text-stroke:0.0px #333;">3</div>
<div class="t" style="left:1318.75px;top:335.30px;font-size:11.7px;color:#22996e;-webkit-text-stroke:0.0px #22996e;">0</div>
<div class="t" style="left:1465.55px;top:335.30px;font-size:11.7px;color:#e5484d;-webkit-text-stroke:0.0px #e5484d;">0</div>
<svg style="left:1545.3px;top:337px" width="5" height="8" viewBox="0 0 5 8"><path d="M0.8 0.8L4 4L0.8 7.2" fill="none" stroke="#444" stroke-width="1.2" stroke-linecap="round" stroke-linejoin="round"/></svg>
<svg style="left:840.3px;top:371px" width="20" height="20" viewBox="0 0 20 20"><defs><clipPath id="cm2"><circle cx="10" cy="10" r="10"/></clipPath></defs><g clip-path="url(#cm2)"><rect width="20" height="20" fill="#cdbb98"/><rect x="11" y="0" width="9" height="12" fill="#b59d68"/><rect x="14" y="1" width="2" height="6" fill="#d9d6c0"/><ellipse cx="9" cy="5.6" rx="5" ry="3.6" fill="#26201c"/><ellipse cx="9.3" cy="9.6" rx="3" ry="3.3" fill="#c29c82"/><path d="M7 6.5c1-1.5 4-1.5 5.3 0.3L12 5 8 4z" fill="#26201c"/><path d="M0 20C0 14 4.5 11.8 10 11.8S20 14 20 20Z" fill="#e6dfd0"/><ellipse cx="18" cy="12.5" rx="1.6" ry="1.6" fill="#5a3a2a"/></g><circle cx="10" cy="10" r="9.6" fill="none" stroke="#d6d0f0" stroke-width="0.8"/></svg>
<div class="t" style="left:862.00px;top:375.30px;font-size:11.7px;color:#333;-webkit-text-stroke:0.0px #333;">Mirza Mujid</div>
<div class="t" style="left:1025.15px;top:375.30px;font-size:11.7px;color:#8a8a8a;-webkit-text-stroke:0.0px #8a8a8a;">0</div>
<div class="t" style="left:1172.05px;top:375.30px;font-size:11.7px;color:#333;-webkit-text-stroke:0.0px #333;">3</div>
<div class="t" style="left:1318.75px;top:375.30px;font-size:11.7px;color:#22996e;-webkit-text-stroke:0.0px #22996e;">0</div>
<div class="t" style="left:1465.55px;top:375.30px;font-size:11.7px;color:#e5484d;-webkit-text-stroke:0.0px #e5484d;">0</div>
<svg style="left:1545.3px;top:377px" width="5" height="8" viewBox="0 0 5 8"><path d="M0.8 0.8L4 4L0.8 7.2" fill="none" stroke="#444" stroke-width="1.2" stroke-linecap="round" stroke-linejoin="round"/></svg>
<svg style="left:840.3px;top:411px" width="20" height="20" viewBox="0 0 20 20"><defs><clipPath id="cmo"><circle cx="10" cy="10" r="10"/></clipPath></defs><g clip-path="url(#cmo)"><rect width="20" height="20" fill="#8b9a9a"/><rect x="0" y="0" width="6" height="20" fill="#9aa8a8"/><path d="M2.5 20C3.5 15.5 7.5 13 12 12.6C16 12.6 18.6 15 19.5 20Z" fill="#bfa68c"/><path d="M7 20L9.5 14.2L13.6 12.6L11.8 20Z" fill="#172640"/><path d="M14.3 12.4L17 13.6L15.6 15z" fill="#b8d4ee"/><ellipse cx="13.2" cy="9.4" rx="2.7" ry="3.3" fill="#c69472"/><ellipse cx="13.8" cy="5.6" rx="3" ry="1.9" fill="#1b1b22"/><path d="M11.8 11.8c1 .8 2.4.8 3.2 0v1.2h-3.2z" fill="#222"/></g><circle cx="10" cy="10" r="9.6" fill="none" stroke="#d6d0f0" stroke-width="0.8"/></svg>
<div class="t" style="left:862.00px;top:415.30px;font-size:11.7px;color:#333;-webkit-text-stroke:0.0px #333;">Mohammad Ra...</div>
<div class="t" style="left:1025.15px;top:415.30px;font-size:11.7px;color:#8a8a8a;-webkit-text-stroke:0.0px #8a8a8a;">1</div>
<div class="t" style="left:1172.05px;top:415.30px;font-size:11.7px;color:#333;-webkit-text-stroke:0.0px #333;">0</div>
<div class="t" style="left:1318.75px;top:415.30px;font-size:11.7px;color:#22996e;-webkit-text-stroke:0.0px #22996e;">0</div>
<div class="t" style="left:1465.55px;top:415.30px;font-size:11.7px;color:#e5484d;-webkit-text-stroke:0.0px #e5484d;">2</div>
<svg style="left:1545.3px;top:417px" width="5" height="8" viewBox="0 0 5 8"><path d="M0.8 0.8L4 4L0.8 7.2" fill="none" stroke="#444" stroke-width="1.2" stroke-linecap="round" stroke-linejoin="round"/></svg>
<svg style="left:840.3px;top:451px" width="20" height="20" viewBox="0 0 20 20"><circle cx="10" cy="10" r="9.5" fill="#e3e3e3" stroke="#d4cdf4" stroke-width="0.9"/><circle cx="11.6" cy="7.1" r="2.4" fill="#bcbcbc"/><path d="M5.6 15.8C5.6 13 8 11.8 10.4 11.8S15.2 13 15.4 15.8Z" fill="#bcbcbc"/><path d="M5.3 5.9L16.4 16.8" stroke="#e3e3e3" stroke-width="2"/><path d="M5.3 5.9L16.4 16.8" stroke="#b5b5b5" stroke-width="0.9"/></svg>
<div class="t" style="left:862.00px;top:455.30px;font-size:11.7px;color:#333;-webkit-text-stroke:0.0px #333;">Rahil Feroz</div>
<div class="t" style="left:1025.15px;top:455.30px;font-size:11.7px;color:#8a8a8a;-webkit-text-stroke:0.0px #8a8a8a;">1</div>
<div class="t" style="left:1172.05px;top:455.30px;font-size:11.7px;color:#333;-webkit-text-stroke:0.0px #333;">1</div>
<div class="t" style="left:1318.75px;top:455.30px;font-size:11.7px;color:#22996e;-webkit-text-stroke:0.0px #22996e;">0</div>
<div class="t" style="left:1465.55px;top:455.30px;font-size:11.7px;color:#e5484d;-webkit-text-stroke:0.0px #e5484d;">0</div>
<svg style="left:1545.3px;top:457px" width="5" height="8" viewBox="0 0 5 8"><path d="M0.8 0.8L4 4L0.8 7.2" fill="none" stroke="#444" stroke-width="1.2" stroke-linecap="round" stroke-linejoin="round"/></svg>
<div class="a" style="left:830px;top:470.5px;width:743px;height:1px;background:#e3e3e3"></div>
<div class="a" style="left:830px;top:471.5px;width:748px;height:32px;background:#fff"></div>
<div class="t" style="left:841.40px;top:484.12px;font-size:11.2px;color:#1f1f1f;font-weight:bold;">Total</div>
<div class="t" style="left:1022.48px;top:484.12px;font-size:11.2px;color:#8a8a8a;font-weight:bold;">11</div>
<div class="t" style="left:1169.38px;top:484.12px;font-size:11.2px;color:#222;font-weight:bold;">11</div>
<div class="t" style="left:1318.89px;top:484.12px;font-size:11.2px;color:#22996e;font-weight:bold;">0</div>
<div class="t" style="left:1465.69px;top:484.12px;font-size:11.2px;color:#e5484d;font-weight:bold;">3</div>
<svg style="left:1545.3px;top:485.5px" width="5" height="8" viewBox="0 0 5 8"><path d="M0.8 0.8L4 4L0.8 7.2" fill="none" stroke="#444" stroke-width="1.2" stroke-linecap="round" stroke-linejoin="round"/></svg>
<div class="a" style="left:1573px;top:204px;width:5px;height:211px;border-radius:3px;background:#c6c6c6"></div>
<div class="card" style="left:62px;top:522px;width:751px;height:240px"><div class="chd" style="height:57px"></div></div>
<svg style="left:76px;top:537px" width="13" height="13" viewBox="0 0 13 13"><path d="M1.3 1.5H11.8L7.8 6.6V11.6L5.5 10.4V6.6Z" fill="none" stroke="#1a1a1a" stroke-width="1.25" stroke-linejoin="round"/></svg>
<div class="t" style="left:98.00px;top:537.14px;font-size:13.3px;color:#1f1f1f;-webkit-text-stroke:0.0px #1f1f1f;">Filter(s)</div>
<div class="a" style="left:151px;top:537px;width:1px;height:18px;background:#cfcfcf"></div>
<svg style="left:160.5px;top:540.5px" width="9" height="9" viewBox="0 0 24 24"><path d="M2.5 3h19l-7.2 8.6v8.9l-4.6-2.6v-6.3z" fill="none" stroke="#7b6cf0" stroke-width="2.4" stroke-linejoin="round"/></svg>
<div class="t" style="left:172.70px;top:539.16px;font-size:10.8px;color:#7b6cf0;-webkit-text-stroke:0.0px #7b6cf0;">Manage</div>
<div class="a" style="left:160.5px;top:550.3px;width:51px;height:1px;background:#7b6cf0"></div>
<div class="t" style="left:98.00px;top:555.65px;font-size:10.1px;color:#7e7e7e;-webkit-text-stroke:0.0px #7e7e7e;transform:scaleX(0.975);transform-origin:0 0">1s ago</div>
<svg style="left:132.3px;top:557.5px" width="9" height="9" viewBox="0 0 10 10"><path d="M1.2 4.3A4 4 0 0 1 8 2.6 M8.8 5.7A4 4 0 0 1 2 7.4" fill="none" stroke="#7b6cf0" stroke-width="1.6"/><path d="M10 0.6V4.4H6.2Z M0 9.4V5.6H3.8Z" fill="#7b6cf0"/></svg>
<div class="t" style="left:735.00px;top:538.86px;font-size:10.8px;color:#7c7c7c;-webkit-text-stroke:0.0px #7c7c7c;transform:scaleX(0.915);transform-origin:0 0">Created on</div>
<svg style="left:735.3px;top:554.6999999999999px" width="9.4" height="9.6" viewBox="0 0 10 10"><rect x="0.55" y="1" width="8.9" height="8.3" rx="1.6" fill="none" stroke="#222" stroke-width="1.1"/><path d="M0.6 3.8H9.4" stroke="#222" stroke-width="1"/><path d="M3 0.2V1.8 M7 0.2V1.8" stroke="#222" stroke-width="1.2" stroke-linecap="round"/></svg>
<div class="t" style="left:748.20px;top:552.40px;font-size:11.7px;color:#222;transform:scaleX(0.9);transform-origin:0 0;-webkit-text-stroke:0.3px #222">Today</div>
<svg style="left:779px;top:556.0999999999999px" width="7.5" height="5.5" viewBox="0 0 8 6"><path d="M1 1.5L4 4.5L7 1.5" fill="none" stroke="#222" stroke-width="1.3" stroke-linecap="round" stroke-linejoin="round"/></svg>
<div class="srch" style="left:76px;top:590px;width:724px;height:28px"></div>
<svg style="left:85px;top:598.5px" width="10" height="10" viewBox="0 0 10 10"><circle cx="4.2" cy="4.5" r="3.3" fill="none" stroke="#333" stroke-width="1.1"/><path d="M6.6 6.9L8.8 9.2" stroke="#333" stroke-width="1.3" stroke-linecap="round"/></svg>
<div class="t" style="left:103.50px;top:599.16px;font-size:10.8px;color:#a9a9a9;-webkit-text-stroke:0.0px #a9a9a9;transform:scaleX(0.915);transform-origin:0 0">Search by filter name</div>
<div class="t" style="left:73.80px;top:631.10px;font-size:11.7px;color:#333;font-weight:bold;">Filters</div>
<svg style="left:113.50914062499999px;top:635.6px" width="7" height="4" viewBox="0 0 7 4"><path d="M0 0L3.5 4L7 0z" fill="#333"/></svg>
<div class="t" style="left:235.67px;top:631.10px;font-size:11.7px;color:#a3a3a3;font-weight:bold;">Fresh</div>
<svg style="left:272.1293671875px;top:635.6px" width="7" height="4" viewBox="0 0 7 4"><path d="M0 0L3.5 4L7 0z" fill="#a3a3a3"/></svg>
<div class="t" style="left:381.74px;top:631.10px;font-size:11.7px;color:#a3a3a3;font-weight:bold;">Active</div>
<svg style="left:421.4573125px;top:635.6px" width="7" height="4" viewBox="0 0 7 4"><path d="M0 0L3.5 4L7 0z" fill="#a3a3a3"/></svg>
<div class="t" style="left:535.24px;top:631.10px;font-size:11.7px;color:#a3a3a3;font-weight:bold;">Won</div>
<svg style="left:564.9619609375px;top:635.6px" width="7" height="4" viewBox="0 0 7 4"><path d="M0 0L3.5 4L7 0z" fill="#a3a3a3"/></svg>
<div class="t" style="left:683.45px;top:631.10px;font-size:11.7px;color:#a3a3a3;font-weight:bold;">Lost</div>
<svg style="left:712.74715625px;top:635.6px" width="7" height="4" viewBox="0 0 7 4"><path d="M0 0L3.5 4L7 0z" fill="#a3a3a3"/></svg>
<div class="a gray" style="left:63px;top:692px;width:749px;height:40px"></div>
<svg style="left:73.7px;top:669.0px" width="11" height="10" viewBox="0 0 24 22"><path d="M2.5 3h19l-7.2 8.6v8.9l-4.6-2.6v-6.3z" fill="none" stroke="#333" stroke-width="2.3" stroke-linejoin="round"/></svg>
<div class="t" style="left:93.50px;top:668.10px;font-size:11.7px;color:#333;-webkit-text-stroke:0.0px #333;">All Incoming W...</div>
<div class="t" style="left:258.95px;top:668.10px;font-size:11.7px;color:#8a8a8a;-webkit-text-stroke:0.0px #8a8a8a;">3</div>
<div class="t" style="left:406.65px;top:668.10px;font-size:11.7px;color:#222;-webkit-text-stroke:0.0px #222;">7</div>
<div class="t" style="left:555.15px;top:668.10px;font-size:11.7px;color:#22996e;-webkit-text-stroke:0.0px #22996e;">0</div>
<div class="t" style="left:703.15px;top:668.10px;font-size:11.7px;color:#e5484d;-webkit-text-stroke:0.0px #e5484d;">0</div>
<svg style="left:784.3px;top:670.0px" width="5" height="8" viewBox="0 0 5 8"><path d="M0.8 0.8L4 4L0.8 7.2" fill="none" stroke="#444" stroke-width="1.2" stroke-linecap="round" stroke-linejoin="round"/></svg>
<svg style="left:73.7px;top:705.4px" width="11" height="10" viewBox="0 0 24 22"><path d="M2.5 3h19l-7.2 8.6v8.9l-4.6-2.6v-6.3z" fill="none" stroke="#333" stroke-width="2.3" stroke-linejoin="round"/></svg>
<div class="t" style="left:93.50px;top:704.50px;font-size:11.7px;color:#333;-webkit-text-stroke:0.0px #333;">All Leads</div>
<div class="t" style="left:255.69px;top:704.50px;font-size:11.7px;color:#8a8a8a;-webkit-text-stroke:0.0px #8a8a8a;">12</div>
<div class="t" style="left:403.83px;top:704.50px;font-size:11.7px;color:#222;-webkit-text-stroke:0.0px #222;">11</div>
<div class="t" style="left:555.15px;top:704.50px;font-size:11.7px;color:#22996e;-webkit-text-stroke:0.0px #22996e;">0</div>
<div class="t" style="left:703.15px;top:704.50px;font-size:11.7px;color:#e5484d;-webkit-text-stroke:0.0px #e5484d;">3</div>
<svg style="left:784.3px;top:706.4px" width="5" height="8" viewBox="0 0 5 8"><path d="M0.8 0.8L4 4L0.8 7.2" fill="none" stroke="#444" stroke-width="1.2" stroke-linecap="round" stroke-linejoin="round"/></svg>
<div class="card" style="left:829px;top:522px;width:750px;height:240px"><div class="chd" style="height:50px"></div></div>
<svg style="left:842px;top:534px" width="14" height="12" viewBox="0 0 14 12"><path d="M1.2 1.6V10.6H13.6" fill="none" stroke="#1a1a1a" stroke-width="1.3" stroke-linecap="round" stroke-linejoin="round"/><path d="M3.6 6.4L5.5 4.4L8 6.8L10.4 4.4" fill="none" stroke="#1a1a1a" stroke-width="1.3" stroke-linecap="round" stroke-linejoin="round"/><path d="M9.8 2H13V5.4Z" fill="#1a1a1a"/></svg>
<div class="t" style="left:864.20px;top:532.94px;font-size:13.3px;color:#1f1f1f;-webkit-text-stroke:0.0px #1f1f1f;">Activity &amp; Performance</div>
<div class="t" style="left:864.20px;top:551.25px;font-size:10.1px;color:#7e7e7e;-webkit-text-stroke:0.0px #7e7e7e;transform:scaleX(0.975);transform-origin:0 0">1s ago</div>
<svg style="left:899px;top:553px" width="9" height="9" viewBox="0 0 10 10"><path d="M1.2 4.3A4 4 0 0 1 8 2.6 M8.8 5.7A4 4 0 0 1 2 7.4" fill="none" stroke="#7b6cf0" stroke-width="1.6"/><path d="M10 0.6V4.4H6.2Z M0 9.4V5.6H3.8Z" fill="#7b6cf0"/></svg>
<svg style="left:1483.7px;top:542.9px" width="9.4" height="9.6" viewBox="0 0 10 10"><rect x="0.55" y="1" width="8.9" height="8.3" rx="1.6" fill="none" stroke="#222" stroke-width="1.1"/><path d="M0.6 3.8H9.4" stroke="#222" stroke-width="1"/><path d="M3 0.2V1.8 M7 0.2V1.8" stroke="#222" stroke-width="1.2" stroke-linecap="round"/></svg>
<div class="t" style="left:1496.60px;top:540.60px;font-size:11.7px;color:#222;transform:scaleX(0.9);transform-origin:0 0;-webkit-text-stroke:0.3px #222">Today</div>
<svg style="left:1527.4px;top:544.3px" width="7.5" height="5.5" viewBox="0 0 8 6"><path d="M1 1.5L4 4.5L7 1.5" fill="none" stroke="#222" stroke-width="1.3" stroke-linecap="round" stroke-linejoin="round"/></svg>
<svg style="left:1553.2px;top:544.5px" width="8" height="6" viewBox="0 0 8 6"><path d="M0.7 0.6L3.2 3L0.7 5.4 M4.3 0.6L6.8 3L4.3 5.4" fill="none" stroke="#333" stroke-width="1.15" stroke-linecap="round" stroke-linejoin="round"/></svg>
<div class="srch" style="left:843px;top:583px;width:723px;height:28px"></div>
<svg style="left:852px;top:591.5px" width="10" height="10" viewBox="0 0 10 10"><circle cx="4.2" cy="4.5" r="3.3" fill="none" stroke="#333" stroke-width="1.1"/><path d="M6.6 6.9L8.8 9.2" stroke="#333" stroke-width="1.3" stroke-linecap="round"/></svg>
<div class="t" style="left:870.50px;top:592.16px;font-size:10.8px;color:#a9a9a9;-webkit-text-stroke:0.0px #a9a9a9;transform:scaleX(0.915);transform-origin:0 0">Search by assignee</div>
<div class="t" style="left:840.30px;top:624.10px;font-size:11.7px;color:#a3a3a3;font-weight:bold;">Assignee</div>
<svg style="left:896.91746875px;top:628.6px" width="7" height="4" viewBox="0 0 7 4"><path d="M0 0L3.5 4L7 0z" fill="#a3a3a3"/></svg>
<div class="t" style="left:1028.42px;top:624.10px;font-size:11.7px;color:#333;font-weight:bold;">Calls</div>
<svg style="left:1060.9814999999999px;top:628.2px" width="7" height="4" viewBox="0 0 7 4"><path d="M0 4L3.5 0L7 4z" fill="#333"/></svg>
<div class="t" style="left:1214.35px;top:624.10px;font-size:11.7px;color:#a3a3a3;font-weight:bold;">Duration</div>
<svg style="left:1267.0471562499997px;top:628.6px" width="7" height="4" viewBox="0 0 7 4"><path d="M0 0L3.5 4L7 0z" fill="#a3a3a3"/></svg>
<div class="t" style="left:1410.02px;top:624.10px;font-size:11.7px;color:#a3a3a3;font-weight:bold;">Revenue</div>
<svg style="left:1463.38353125px;top:628.6px" width="7" height="4" viewBox="0 0 7 4"><path d="M0 0L3.5 4L7 0z" fill="#a3a3a3"/></svg>
<div class="a gray" style="left:830px;top:688px;width:743px;height:40px"></div>
<div class="a" style="left:840.3px;top:658px;width:20px;height:20px;border-radius:50%;background:#0f87d6"></div>
<div class="t" style="left:846.51px;top:662.81px;font-size:10.5px;color:#fff;-webkit-text-stroke:0.0px #fff;">R</div>
<div class="t" style="left:865.90px;top:662.30px;font-size:11.7px;color:#333;-webkit-text-stroke:0.0px #333;">Riza Hayat</div>
<div class="t" style="left:1046.49px;top:662.30px;font-size:11.7px;color:#333;-webkit-text-stroke:0.0px #333;">33</div>
<div class="t" style="left:1237.62px;top:662.30px;font-size:11.7px;color:#333;-webkit-text-stroke:0.0px #333;">22m</div>
<div class="t" style="left:1425.30px;top:662.30px;font-size:11.7px;color:#22996e;-webkit-text-stroke:0.0px #22996e;">&#8377;</div>
<div class="t" style="left:1434.00px;top:662.30px;font-size:11.7px;color:#22996e;-webkit-text-stroke:0.0px #22996e;">6.01K</div>
<svg style="left:1545.7px;top:664px" width="5" height="8" viewBox="0 0 5 8"><path d="M0.8 0.8L4 4L0.8 7.2" fill="none" stroke="#444" stroke-width="1.2" stroke-linecap="round" stroke-linejoin="round"/></svg>
<svg style="left:840.3px;top:698px" width="20" height="20" viewBox="0 0 20 20"><defs><clipPath id="cm3"><circle cx="10" cy="10" r="10"/></clipPath></defs><g clip-path="url(#cm3)"><rect width="20" height="20" fill="#cdbb98"/><rect x="11" y="0" width="9" height="12" fill="#b59d68"/><rect x="14" y="1" width="2" height="6" fill="#d9d6c0"/><ellipse cx="9" cy="5.6" rx="5" ry="3.6" fill="#26201c"/><ellipse cx="9.3" cy="9.6" rx="3" ry="3.3" fill="#c29c82"/><path d="M7 6.5c1-1.5 4-1.5 5.3 0.3L12 5 8 4z" fill="#26201c"/><path d="M0 20C0 14 4.5 11.8 10 11.8S20 14 20 20Z" fill="#e6dfd0"/><ellipse cx="18" cy="12.5" rx="1.6" ry="1.6" fill="#5a3a2a"/></g><circle cx="10" cy="10" r="9.6" fill="none" stroke="#d6d0f0" stroke-width="0.8"/></svg>
<div class="t" style="left:865.90px;top:702.30px;font-size:11.7px;color:#333;-webkit-text-stroke:0.0px #333;">Mirza Mujid</div>
<div class="t" style="left:1046.49px;top:702.30px;font-size:11.7px;color:#333;-webkit-text-stroke:0.0px #333;">31</div>
<div class="t" style="left:1237.62px;top:702.30px;font-size:11.7px;color:#333;-webkit-text-stroke:0.0px #333;">56m</div>
<div class="t" style="left:1425.30px;top:702.30px;font-size:11.7px;color:#22996e;-webkit-text-stroke:0.0px #22996e;">&#8377;</div>
<div class="t" style="left:1434.00px;top:702.30px;font-size:11.7px;color:#22996e;-webkit-text-stroke:0.0px #22996e;">4.25K</div>
<svg style="left:1545.7px;top:704px" width="5" height="8" viewBox="0 0 5 8"><path d="M0.8 0.8L4 4L0.8 7.2" fill="none" stroke="#444" stroke-width="1.2" stroke-linecap="round" stroke-linejoin="round"/></svg>
<div class="a" style="left:1574px;top:611.5px;width:4px;height:47px;border-radius:2px;background:#c6c6c6"></div>
<div class="a" style="left:1596px;top:39px;width:4px;height:517px;background:#c1c1c1"></div>
</body></html>
